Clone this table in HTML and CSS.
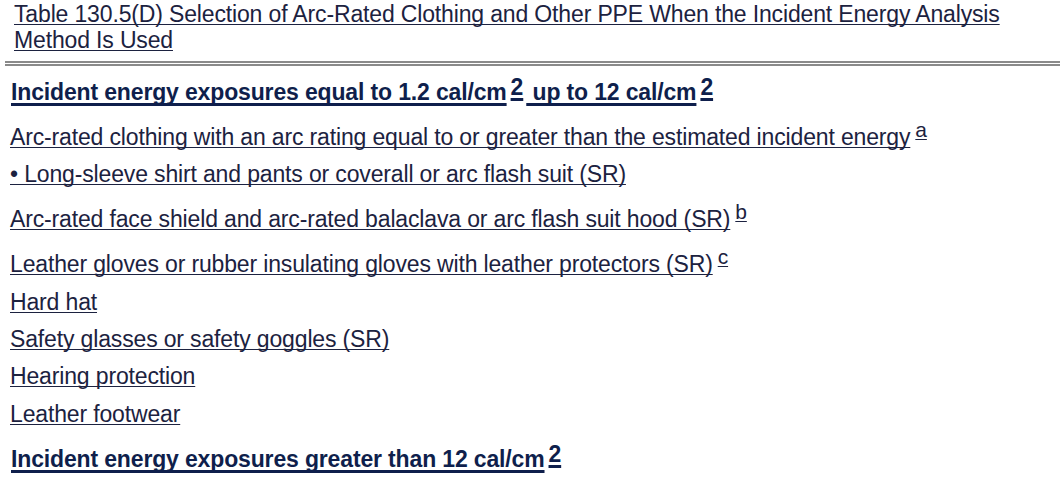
FILE: index.html
```html
<!DOCTYPE html>
<html>
<head>
<meta charset="utf-8">
<link rel="stylesheet" href="styles.css">
</head>
<body>
<div class="page">
  <div class="title"><a href="#">Table 130.5(D) Selection of Arc-Rated Clothing and Other PPE When the Incident Energy Analysis Method Is Used</a></div>
  <div class="rule"></div>
  <div class="rows">
    <p class="head tall"><a href="#">Incident energy exposures equal to 1.2 cal/cm</a><a class="sup" href="#">2</a><a href="#"> up to 12 cal/cm</a><a class="sup" href="#">2</a></p>
    <p class="item tall"><a href="#">Arc-rated clothing with an arc rating equal to or greater than the estimated incident energy</a><a class="sup" href="#">a</a></p>
    <p class="item"><a href="#">• Long-sleeve shirt and pants or coverall or arc flash suit (SR)</a></p>
    <p class="item tall"><a href="#">Arc-rated face shield and arc-rated balaclava or arc flash suit hood (SR)</a><a class="sup" href="#">b</a></p>
    <p class="item tall"><a href="#">Leather gloves or rubber insulating gloves with leather protectors (SR)</a><a class="sup" href="#">c</a></p>
    <p class="item nudge"><a href="#">Hard hat</a></p>
    <p class="item"><a href="#">Safety glasses or safety goggles (SR)</a></p>
    <p class="item"><a href="#">Hearing protection</a></p>
    <p class="item nudge"><a href="#">Leather footwear</a></p>
    <p class="head tall"><a href="#">Incident energy exposures greater than 12 cal/cm</a><a class="sup" href="#">2</a></p>
  </div>
</div>
</body>
</html>
```

FILE: styles.css
```css
html, body {
  margin: 0;
  padding: 0;
  background: #ffffff;
}
body {
  font-family: "Liberation Sans", Arial, sans-serif;
  color: #1c2240;
  font-size: 23px;
  letter-spacing: -0.15px;
}
a {
  color: #1c2240;
  text-decoration: underline;
  text-decoration-thickness: 1px;
  text-underline-offset: 2px;
  text-decoration-skip-ink: none;
}
.title {
  padding: 1px 0 0 14px;
  line-height: 26px;
  width: 1000px;
}
.rule {
  margin: 8px 3px 0 5px;
  height: 1px;
  border-top: 2px solid #8a8a8a;
  border-bottom: 2px solid #8a8a8a;
}
.rows {
  padding: 0 0 0 10px;
}
.rows p {
  margin: 0;
  line-height: 37px;
  white-space: nowrap;
}
.rows p.tall {
  padding-top: 8px;
}
.rows p.nudge {
  padding-top: 1px;
}
.head {
  font-weight: bold;
  padding-left: 1px;
}
.head a {
  color: #0f1f4c;
  text-decoration-thickness: 3px;
  text-underline-offset: 3px;
}
.sup {
  line-height: 0;
  vertical-align: 8px;
  margin-left: 5px;
  font-size: 21px;
}
.head .sup {
  vertical-align: 5px;
  font-size: 23px;
  margin-left: 4px;
  margin-right: 3px;
}
```
